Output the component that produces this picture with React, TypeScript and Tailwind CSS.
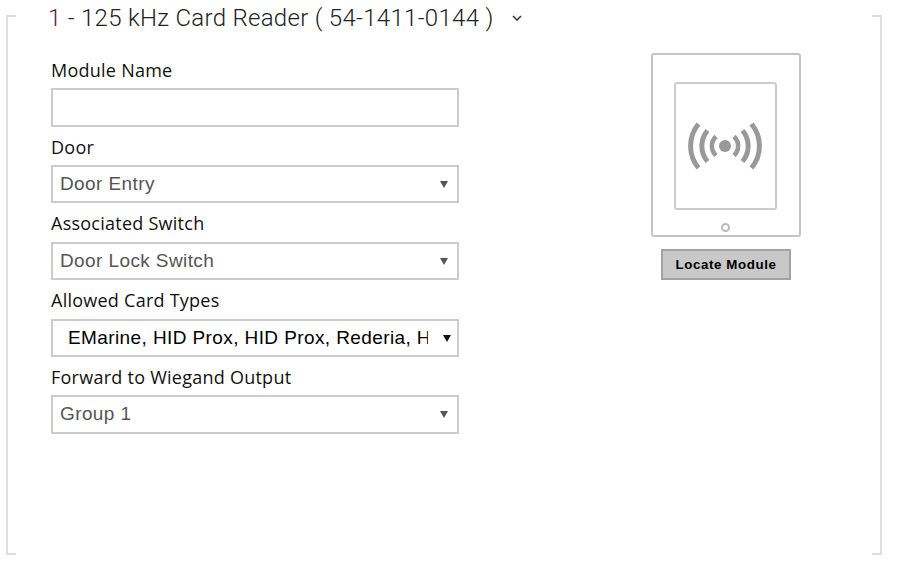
const fields = [
  { label: "Door", value: "Door Entry", labelH: "h-[38px]", boxH: "h-[38px]" },
  { label: "Associated Switch", value: "Door Lock Switch", labelH: "h-[39px]", boxH: "h-[38px]" },
  {
    label: "Allowed Card Types",
    value: "EMarine, HID Prox, HID Prox, Rederia, HID iClass",
    labelH: "h-[39px]",
    boxH: "h-[38px]",
    active: true,
  },
  { label: "Forward to Wiegand Output", value: "Group 1", labelH: "h-[38px]", boxH: "h-[39px]" },
];

function Field({
  label,
  value,
  labelH,
  boxH,
  active,
}: {
  label: string;
  value: string;
  labelH: string;
  boxH: string;
  active?: boolean;
}) {
  return (
    <div>
      <div className={`${labelH} pt-[5px] font-['Open_Sans',sans-serif] text-[18px] leading-[30px] tracking-[0.25px] text-[#111]`}>
        {label}
      </div>
      <div className={`${boxH} flex w-[408px] items-center border-2 border-[#cccccc] bg-white`}>
        <div
          className={
            active
              ? "ml-[15px] w-[360px] overflow-hidden whitespace-nowrap font-['Liberation_Sans',sans-serif] text-[19px] tracking-[0.4px] text-black"
              : "ml-[7px] w-[374px] overflow-hidden whitespace-nowrap font-['Liberation_Sans',sans-serif] text-[19px] tracking-[0.4px] text-[#555555]"
          }
        >
          {value}
        </div>
        <svg width="8" height="7" viewBox="0 0 8 7" className={active ? "ml-[15px]" : "ml-[6px]"}>
          <path d="M0 0h8L4 7z" fill={active ? "#111111" : "#555555"} />
        </svg>
      </div>
    </div>
  );
}

function ReaderIcon() {
  return (
    <svg width="80" height="56" viewBox="0 0 80 56" fill="none" stroke="#999999" strokeWidth="5" className="-ml-px">
      <circle cx="40" cy="28" r="6" fill="#999999" stroke="none" />
      <path d="M31 18.500a13 13 0 0 0 0 19" strokeWidth="4.500" />
      <path d="M49 18.500a13 13 0 0 1 0 19" strokeWidth="4.500" />
      <path d="M22.500 12.500a24 24 0 0 0 0 31" />
      <path d="M57.500 12.500a24 24 0 0 1 0 31" />
      <path d="M13.500 6a34.500 34.500 0 0 0 0 44" />
      <path d="M66.500 6a34.500 34.500 0 0 1 0 44" />
    </svg>
  );
}

export default function App() {
  return (
    <div className="h-[575px] w-[905px] overflow-hidden bg-white font-['Roboto',sans-serif]">
      <div className="relative ml-[6px] mt-[15px] h-[540px] w-[876px] border-x-2 border-[#dddddd]">
        <span className="absolute -left-[2px] top-0 h-[2px] w-[10px] bg-[#dddddd]" />
        <span className="absolute -right-[2px] top-0 h-[2px] w-[10px] bg-[#dddddd]" />
        <span className="absolute -left-[2px] bottom-0 h-[2px] w-[10px] bg-[#dddddd]" />
        <span className="absolute -right-[2px] bottom-0 h-[2px] w-[10px] bg-[#dddddd]" />

        <div className="absolute left-[38px] -top-[15px] flex h-[36px] items-center bg-white px-[2px] text-[24px] font-light tracking-[0.3px] text-[#222]">
          <span className="text-[#5b1a4a]">1</span>
          <span className="ml-[6px]">- 125 kHz Card Reader ( 54-1411-0144 )</span>
          <svg width="10" height="6" viewBox="0 0 10 6" fill="none" stroke="#333333" strokeWidth="1.500" className="ml-[18px]">
            <path d="M1 1l4 4 4-4" />
          </svg>
        </div>

        <div className="flex pl-[43px] pt-[38px]">
          <div>
            <div className="h-[35px] font-['Open_Sans',sans-serif] text-[18px] leading-[35px] tracking-[0.25px] text-[#111]">
              Module Name
            </div>
            <div className="h-[39px] w-[408px] border-2 border-[#cccccc] bg-white" />
            {fields.map((f) => (
              <Field key={f.label} {...f} />
            ))}
          </div>

          <div className="ml-[192px] flex w-[150px] flex-col items-center">
            <div className="flex h-[184px] w-[150px] flex-col rounded-[3px] border-2 border-[#c4c4c4] pl-[21px] pt-[27px]">
              <div className="flex h-[128px] w-[103px] items-center justify-center rounded-[3px] border-2 border-[#cccccc]">
                <ReaderIcon />
              </div>
              <span className="ml-[47px] mt-[13px] h-[9px] w-[9px] rounded-full border-2 border-[#bbbbbb]" />
            </div>
            <button className="mt-[12px] h-[31px] w-[130px] border-2 border-[#a3a3a3] bg-[#c8c8c8] font-['Liberation_Sans',sans-serif] text-[13.33px] font-bold tracking-[0.6px] text-black">
              Locate Module
            </button>
          </div>
        </div>
      </div>
    </div>
  );
}
